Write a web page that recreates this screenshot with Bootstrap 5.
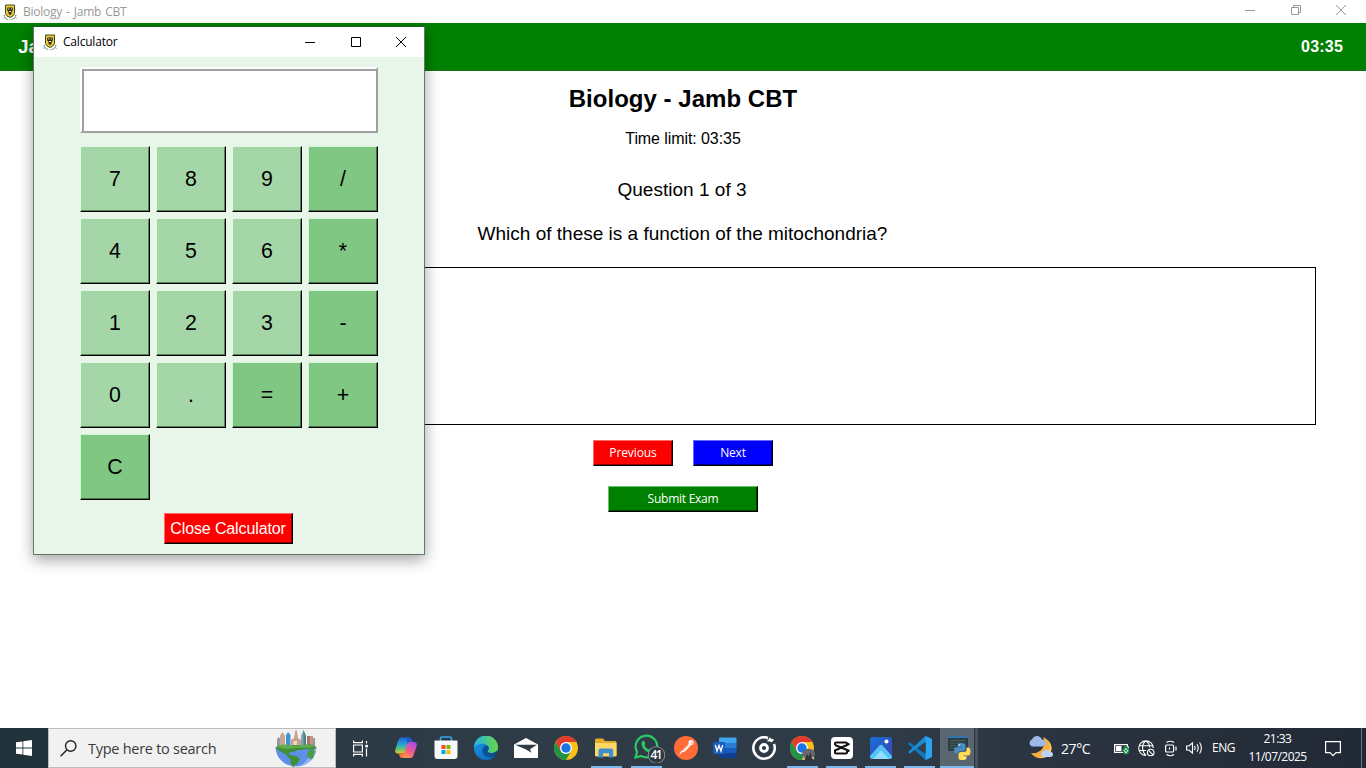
<!DOCTYPE html>
<html lang="en">
<head>
<meta charset="utf-8">
<meta name="viewport" content="width=device-width, initial-scale=1">
<title>Biology - Jamb CBT</title>
<link href="https://cdn.jsdelivr.net/npm/bootstrap@5.3.0/dist/css/bootstrap.min.css" rel="stylesheet">
<style>
  body { font-family: "Liberation Sans", sans-serif; color: #000; background: #fff; }
  svg { display: block; flex: none; }
  .segoe { font-family: "Open Sans", "Noto Sans", sans-serif; }
  .desktop { height: 768px; }
  .main-title { height: 23px; padding-left: 2px; font-size: 12px; color: #999; }
  .main-title .win-name { margin-left: 5px; letter-spacing: -.25px; word-spacing: 1.2px; }
  .win-name { line-height: 16px; }
  .appbar { height: 48px; background: #008000; border-bottom: 1px solid #1a701a; padding: 1px 23px 0 18px; font-weight: 700; color: #fff; }
  .app-name { font-size: 19px; }
  .clock { font-size: 16px; letter-spacing: .2px; }
  .exam h1 { font-size: 24px; font-weight: 700; line-height: 28px; margin: 14px 0 0; letter-spacing: .03px; }
  .limit { font-size: 16px; line-height: 20px; margin-top: 16px; letter-spacing: -.08px; }
  .counter { font-size: 19px; line-height: 24px; margin: 29px 2px 0 0; letter-spacing: .02px; }
  .question { font-size: 19px; line-height: 24px; margin: 20px 1px 0 0; }
  .answers { margin: 21px 50px 0; height: 158px; border: 1px solid #000; }
  .raised { border: 1px solid; border-radius: 0; padding: 0; color: #fff; position: relative; }
  .raised.small-key { height: 26px; width: 80px; font-size: 12px; line-height: 16px; letter-spacing: -.25px; }
  .red { background: #f00; border-color: #ff6a6a #000 #000 #ff6a6a; box-shadow: inset -1px -1px #8a0000; }
  .blue { background: #00f; border-color: #6a6aff #000 #000 #6a6aff; box-shadow: inset -1px -1px #00008a; }
  .green { background: #008000; border-color: #6ac06a #000 #000 #6ac06a; box-shadow: inset -1px -1px #004600; }
  .raised.submit { width: 150px; }

  .calc { position: absolute; left: 33px; top: 26px; width: 392px; height: 529px; background: #e8f5e9; border: 1px solid #6c736d; border-top-color: #1d5c1d; box-shadow: 0 5px 14px rgba(0,0,0,.36); }
  .calc-title { height: 30px; background: #fff; padding-left: 8px; font-size: 12px; }
  .calc-title .win-name { margin-left: 5px; letter-spacing: -.2px; }
  .win-ctl { width: 46px; display: flex; justify-content: center; }
  .win-ctl:nth-child(2) { width: 45px; }
  .display { margin: 10px 46px 0; width: 298px; height: 66px; background: #fff; border: 2px solid; border-color: #fff #a0a0a0 #a0a0a0 #fff; box-shadow: inset 1px 1px #a0a0a0, inset 2px 2px #a0a0a0; }
  .keys { display: grid; grid-template-columns: repeat(4, 70px); gap: 6px; margin: 13px 46px 0; }
  .key { height: 66px; background: #a5d6a7; border: 1px solid; border-color: #e3f9e4 #000 #000 #e3f9e4; box-shadow: inset -1px -1px #5d825f; border-radius: 0; padding: 0; font-size: 21.3px; line-height: 64px; color: #000; }
  .key.op { background: #81c784; border-color: #cdf7cf #000 #000 #cdf7cf; box-shadow: inset -1px -1px #456f47; }
  .raised.close-calc { width: 129px; height: 31px; font-size: 16px; line-height: 27px; margin: 13px 2px 0 0; letter-spacing: -.12px; }

  .taskbar { height: 40px; background: linear-gradient(90deg, #20313a 0, #2b3a44 336px, #2f3c47 560px, #2e3a46 900px, #28303c 1150px, #222936 1366px); color: #fff; }
  .start { width: 48px; }
  .search { width: 288px; background: #f1f1f1; border: 1px solid #bdbdbd; color: #3a3a3a; font-size: 14.5px; padding-left: 11px; padding-right: 18px; }
  .search span { margin: 1px 0 0 11px; letter-spacing: -.27px; }
  .task { width: 40px; display: flex; align-items: center; justify-content: center; }
  .task.slim { width: 39px; padding-right: 1px; }
  .task.on { background: linear-gradient(#7ab8ee, #7ab8ee) 50% 100% / 31px 2px no-repeat; }
  .task.slim.on { background-position: 3px 100%; }
  .task.front { width: 34px; padding-left: 6px; background: linear-gradient(#7ab8ee, #7ab8ee) 0 100% / 100% 2px no-repeat, #5a666f; }
  .edge-tab { width: 4px; border-left: 1px solid #28323b; background: #46525c; }
  .tray { font-size: 12px; }
  .temp { font-size: 14px; width: 53px; padding-left: 8px; letter-spacing: -.4px; }
  .lang { margin-left: 9px; width: 24px; letter-spacing: -.5px; }
  .stamp { margin-left: 12px; width: 59px; line-height: 18px; text-align: center; letter-spacing: -.55px; white-space: nowrap; }
  .peek { width: 5px; border-left: 1px solid #6c727b; }
</style>
</head>
<body>
<svg width="0" height="0" class="position-absolute">
  <defs>
    <symbol id="crest" viewBox="0 0 16 16">
      <path d="M2 11l1 3 3 1.500M14 11l-1 3-3 1.500" fill="none" stroke="#2f6d3c" stroke-dasharray="1.500 .8"/>
      <path d="M1 14.500l2-1M15 14.500l-2-1M5 15.500h6" stroke="#98a898" stroke-dasharray="1 1"/>
      <path d="M3.500 1h9v8.500q-.500 2.500-4.500 4-4-1.500-4.500-4z" fill="#f0c63a" stroke="#3d4a1c"/>
      <path d="M5.500 3.500h5L11 6 9.500 8v2L8 11 6.500 9.500V8L5 6z" fill="#2a2a18"/>
      <path d="M6 5h1.500M8.700 5H10M7 7.500h2" stroke="#f3e6b2" stroke-width="1.100"/>
    </symbol>
    <symbol id="chrome" viewBox="0 0 24 24">
      <circle cx="12" cy="12" r="12" fill="#fbc116"/>
      <path d="M1.600 6A12 12 0 0 0 12 24l5.200-9H6.800z" fill="#229342"/>
      <path d="M1.600 6A12 12 0 0 1 22.400 6H12L6.800 15z" fill="#e33b2e"/>
      <circle cx="12" cy="12" r="6" fill="#fff"/><circle cx="12" cy="12" r="4.700" fill="#1a73e8"/>
    </symbol>
    <linearGradient id="cpA" x1="0" y1="0" x2="0" y2="1"><stop stop-color="#2460d8"/><stop offset=".45" stop-color="#27a6d5"/><stop offset=".75" stop-color="#6cc56a"/><stop offset="1" stop-color="#f2c72b"/></linearGradient>
    <linearGradient id="cpB" x1=".7" y1="0" x2=".2" y2="1"><stop stop-color="#a64ee8"/><stop offset=".5" stop-color="#f0568c"/><stop offset="1" stop-color="#ff9b4b"/></linearGradient>
    <linearGradient id="edA" x1="0" y1="0" x2="1" y2="0"><stop stop-color="#27b2e8"/><stop offset="1" stop-color="#66d844"/></linearGradient>
    <linearGradient id="edB" x1="0" y1="0" x2="1" y2="1"><stop stop-color="#1d9be8"/><stop offset="1" stop-color="#0b5fb8"/></linearGradient>
    <linearGradient id="phA" x1="0" y1="0" x2="1" y2="1"><stop stop-color="#1672d6"/><stop offset="1" stop-color="#3f3fb4"/></linearGradient>
  </defs>
</svg>

<div class="desktop d-flex flex-column position-relative overflow-hidden">
  <header class="main-title segoe d-flex align-items-center">
    <svg width="16" height="16"><use href="#crest"/></svg>
    <span class="win-name">Biology - Jamb CBT</span>
    <div class="ms-auto d-flex align-items-center pb-1" style="margin-right:2px">
      <span class="win-ctl"><svg width="10" height="10" stroke="#999"><path d="M0 5.500h10"/></svg></span>
      <span class="win-ctl"><svg width="10" height="10" fill="none" stroke="#999"><path d="M.5 2.500h7v7h-7zM2.500 2.500v-2h7v7h-2"/></svg></span>
      <span class="win-ctl"><svg width="10" height="10" stroke="#999"><path d="M0 0l10 10M10 0L0 10"/></svg></span>
    </div>
  </header>
  <nav class="appbar d-flex align-items-center justify-content-between">
    <span class="app-name">Ja</span>
    <span class="clock">03:35</span>
  </nav>

  <main class="exam flex-grow-1 text-center">
    <h1>Biology - Jamb CBT</h1>
    <div class="limit">Time limit: 03:35</div>
    <div class="counter">Question 1 of 3</div>
    <div class="question">Which of these is a function of the mitochondria?</div>
    <div class="answers"></div>
    <div class="d-flex justify-content-center segoe" style="gap:20px;margin-top:15px">
      <button class="raised small-key red" style="letter-spacing:-.1px">Previous</button>
      <button class="raised small-key blue">Next</button>
    </div>
    <div class="d-flex justify-content-center segoe" style="margin-top:20px">
      <button class="raised small-key submit green">Submit Exam</button>
    </div>
  </main>

  <section class="calc">
    <div class="calc-title segoe d-flex align-items-center">
      <svg width="16" height="16"><use href="#crest"/></svg>
      <span class="win-name">Calculator</span>
      <div class="ms-auto d-flex align-items-center">
        <span class="win-ctl"><svg width="10" height="10" stroke="#000"><path d="M0 5.500h10"/></svg></span>
        <span class="win-ctl"><svg width="10" height="10" fill="none" stroke="#000"><path d="M.5 .5h9v9h-9z"/></svg></span>
        <span class="win-ctl"><svg width="10" height="10" stroke="#000"><path d="M0 0l10 10M10 0L0 10"/></svg></span>
      </div>
    </div>
    <div class="display"></div>
    <div class="keys">
      <button class="key">7</button><button class="key">8</button><button class="key">9</button><button class="key op">/</button>
      <button class="key">4</button><button class="key">5</button><button class="key">6</button><button class="key op">*</button>
      <button class="key">1</button><button class="key">2</button><button class="key">3</button><button class="key op">-</button>
      <button class="key">0</button><button class="key">.</button><button class="key op">=</button><button class="key op">+</button>
      <button class="key op">C</button>
    </div>
    <div class="d-flex justify-content-center"><button class="raised close-calc red">Close Calculator</button></div>
  </section>

  <footer class="taskbar segoe d-flex">
    <div class="start d-flex align-items-center justify-content-center">
      <svg width="16" height="16" fill="#fff"><path d="M0 2.300l6.500-.9v6.200H0zM7.300 1.300L16 0v7.600H7.300zM0 8.400h6.500v6.200L0 13.700zM7.300 8.400H16V16l-8.700-1.200z"/></svg>
    </div>
    <div class="search d-flex align-items-center">
      <svg width="17" height="17" fill="none" stroke="#222" stroke-width="1.400"><circle cx="10.700" cy="6" r="5.200"/><path d="M7 9.700L.6 16.200"/></svg>
      <span>Type here to search</span>
      <svg class="ms-auto" width="42" height="38" viewBox="0 0 42 38">
        <path d="M2 20V10l2-2 1 2v10zM37 20V9h3v11z" fill="#8e9aa8"/>
        <path d="M5 20V6.500L7.500 3 10 6.500V20z" fill="#c9a68d"/><path d="M11 20V6l2-3 2.500 3v14z" fill="#3f93d0"/>
        <path d="M16 20v-9l3-2 1-6 1-3 1 3 1 6 3 2v9z" fill="#caa08c"/><path d="M18.500 20v-8h3.500v8z" fill="#eed9c6"/>
        <path d="M26 20V7l2.500-6L31 7v13z" fill="#79a8b5"/><path d="M28.500 20V1L31 7v13z" fill="#4f7f93"/>
        <path d="M32 20V7h6v13z" fill="#a97864"/><path d="M35 20V7h3v13z" fill="#c7988a"/>
        <path d="M.500 18h41A20.500 19.500 0 0 1 .5 18z" fill="#5f8fe8"/>
        <path d="M24 37.300Q34 33 36 20l5.300-1q-.5 15-17.300 18.300z" fill="#93b5f5"/>
        <path d="M1 19q1-3 6-3l7 .5 6-.5h7l9-.5q5 .5 5 3.500l-3 2-6-1-5 1-4 0-3 1.500-4 .5-3 2 5 1.500 4 1 3 2.500-2 4-3 2-2 2.500-2-4-1-4.500-3-3-2-2-5-2.500z" fill="#3f8f3a"/>
        <path d="M33 22l4-1.500 3 1.500-2 7-3 1.500-3-4z" fill="#4d9c40"/>
        <path d="M1.500 17.500q6-3 12-1.500t13 0 14.500 1.500q-7 1.700-13 1.200t-13 .8-13.500-2z" fill="#63ad50"/>
      </svg>
    </div>
    <div class="task" style="width:50px;padding-right:2px">
      <svg width="17" height="17" fill="none" stroke="#fff" stroke-width="1.200"><path d="M1.600 .5v2.100h8.800V.5M1.600 5h8.800v7H1.600zM1.600 16.500v-2.100h8.800v2.100M14.500 1v2.500M14.500 8.500v8"/><path d="M13.300 4.800h2.600v2.600h-2.600z" fill="#fff" stroke="none"/></svg>
    </div>
    <div class="task"><svg width="24" height="24" viewBox="0 0 24 24">
      <path d="M16.500 22H10q-2 0-2-1.500L12.500 7.500q.7-1.500 2.700-1.500H20q3.500 0 2.700 4L19.500 19.500q-.8 2.500-3 2.500z" fill="url(#cpB)"/>
      <path d="M7.500 1.500h7.700q2 0 2.600 2l.7 2.500h-3q-2 0-2.600 2l-2.200 7.500q-.7 2-2.700 2H4q-3.500 0-2.700-4L4.500 4q.8-2.500 3-2.500z" fill="url(#cpA)"/>
      <path d="M12.900 8q.6-2 2.600-2h3l-.7-2.500q-.6-2-2.600-2h-3.700q2 0 1.400 6.500z" fill="#2358c5"/>
      <path d="M12.300 10.500L9.800 19q-.6 2.500-2.500 3-1.800-.5-2.300-4.500h3q2 0 2.700-2z" fill="#f0793e"/></svg></div>
    <div class="task"><svg width="24" height="24" viewBox="0 0 24 24" style="margin-top:-1px">
      <path d="M6.500 5.500v-3q0-1.500 1.500-1.500h8q1.500 0 1.500 1.500v3" fill="none" stroke="#32a8e8" stroke-width="1.700"/>
      <path d="M.5 4.500h23V20q0 3-3 3h-17q-3 0-3-3z" fill="#f5f8fa"/>
      <path d="M7.500 9h4v4h-4z" fill="#f25022"/><path d="M12.500 9h4v4h-4z" fill="#7fba00"/><path d="M7.500 14h4v4h-4z" fill="#00a4ef"/><path d="M12.500 14h4v4h-4z" fill="#ffb900"/></svg></div>
    <div class="task"><svg width="24" height="24" viewBox="0 0 24 24">
      <circle cx="12" cy="12" r="12" fill="url(#edB)"/>
      <path d="M0 12A12 12 0 0 1 24 11c.3 4-3 6-6.500 6-3.500 0-4.300-1.500-3.300-3 1.300-2.500-1-6.200-5.200-6.200C4.500 7.800 1 9.500 0 12z" fill="url(#edA)"/>
      <path d="M9.300 11.500C7 16 10 21 15.500 21.500q3.500 0 6.300-2.500l1.200-2-.5-1.800q-2 1.800-5 1.800c-3.500 0-4.300-1.500-3.300-3q.800-1.500.3-3-3.500-2-5.200.5z" fill="#0c4f96"/>
      <path d="M22.500 15.500q1.500-.5 1.500-1l1 4-3 3-1.500-.5q2-1.500 2.300-3-1.500.8-3 1z" fill="#2d3a45"/>
      <path d="M14.200 14q1.300-2.500-.7-4.500-1.500 0-2.500 1 1.500 1 1 3.500z" fill="#0c4f96"/></svg></div>
    <div class="task"><svg width="24" height="20" viewBox="0 0 24 20">
      <path d="M0 6.500L12 0l12 6.500V20H0z" fill="#fff"/><path d="M1 6.800h22l-7 4.500 1.500 3.500L12 11.500z" fill="#2e3b46"/></svg></div>
    <div class="task"><svg width="24" height="24"><use href="#chrome"/></svg></div>
    <div class="task on"><svg width="22" height="20" viewBox="0 0 22 20">
      <path d="M0 2Q0 .5 1.500.5H8L10 3h10q1.500 0 1.500 1.500V18H0z" fill="#e9a92b"/><path d="M0 5h21.500v12q0 1.500-1.500 1.500H1.500Q0 18.500 0 17z" fill="#fcd869"/>
      <path d="M3.500 19.500v-7q0-2 2-2h10.700q2 0 2 2v7H14v-4.200H8v4.200z" fill="#3f8fd0"/></svg></div>
    <div class="task on"><svg width="34" height="30" viewBox="0 0 34 30" style="margin-left:5px">
      <path d="M3.500 24.500l1.600-5.600a10.800 10.800 0 1 1 4.100 4z" fill="none" stroke="#28cb63" stroke-width="2.200"/>
      <path d="M10 8.500c1-1 2-1 2.500 0l.8 2c.3.800-.8 1.500-.8 2 .9 2 2.500 3.400 4.500 4 .6 0 1.300-1.500 2-1.200l2 1c1 .6.300 2.200-.6 2.700-5 2.500-13-5-10.400-10.500z" fill="#28cb63"/>
      <circle cx="24.500" cy="22" r="8.300" fill="#2c3740" stroke="#8b949b"/>
      <text x="24.500" y="26.300" text-anchor="middle" font-family="Open Sans, sans-serif" font-size="12" font-weight="600" fill="#fff" textLength="12">41</text></svg></div>
    <div class="task"><svg width="24" height="24" viewBox="0 0 24 24">
      <circle cx="12" cy="12" r="12" fill="#ff6c37"/><circle cx="17" cy="6.500" r="2.500" fill="#fff"/><path d="M14.800 7.800l2 1.700-6 6-2.600.8L5 19.500l1.800-4z" fill="#fff"/><path d="M8 15l6.500-6M16.500 6.700l2 .5" stroke="#ff6c37" stroke-width=".7"/></svg></div>
    <div class="task slim"><svg width="24" height="22" viewBox="0 0 24 22">
      <path d="M6 1.500Q6 .5 7 .5h15.500q1 0 1 1V6H6z" fill="#41a5ee"/><path d="M6 6h17.500v5H6z" fill="#2b7cd3"/><path d="M6 11h17.500v5H6z" fill="#185abd"/><path d="M6 16h17.500v4q0 1-1 1H7q-1 0-1-1z" fill="#103f91"/>
      <rect y="5" width="12" height="12" rx="1" fill="#185abd"/><path d="M2.300 8l1.700 6L6 8.500 8 14l1.700-6" fill="none" stroke="#fff" stroke-width="1.400"/></svg></div>
    <div class="task slim"><svg width="24" height="24" viewBox="0 0 24 24" fill="none" stroke="#fff">
      <path d="M16 2A10.700 10.700 0 1 0 22 8" stroke-width="2.500"/><circle cx="12" cy="12" r="3.500" stroke-width="2.800"/><path d="M15.500 4.500l6-.5M17.500 2l2.500 4" stroke-width="2"/></svg></div>
    <div class="task slim on"><svg width="26" height="24" viewBox="0 0 26 24">
      <use href="#chrome" width="24" height="24"/><path d="M12 19q0-4 3-5 2-2 5-1 4 0 5 4l-1 6H13z" fill="#65676a"/><path d="M15 24l2-6 2 3 1-5 3 8z" fill="#303234"/><path d="M12 23l2-3 1 4zM21 21h3v3z" fill="#cfbb94"/></svg></div>
    <div class="task slim on"><svg width="22" height="22" viewBox="0 0 22 22">
      <rect width="22" height="22" rx="4" fill="#fff"/><path d="M4 8V6.500q0-1 1-1h10q1 0 1 1V8L4 13.500v2q0 1 1 1h10q1 0 1-1V14M4 8l14.500 6M16 8l2.500-1.300" fill="none" stroke="#111" stroke-width="2"/></svg></div>
    <div class="task slim on"><svg width="22" height="22" viewBox="0 0 22 22">
      <rect width="22" height="22" rx="2.500" fill="url(#phA)"/><path d="M0 19L9.500 8.500q1.500-1.400 3 0L22 19v.5q0 2.500-2.500 2.500h-17Q0 22 0 19.500z" fill="#55c3f5"/><path d="M3 22l8-8.500 8 8.500z" fill="#8fe0ff"/><circle cx="16.500" cy="4.500" r="2" fill="#fff"/></svg></div>
    <div class="task slim on"><svg width="24" height="24" viewBox="0 0 24 24">
      <path d="M1.500 6.200L0 8l17.500 16 5-2.200z" fill="#0f79bd"/><path d="M1.500 17.800L0 16 17.500 0l5 2.200z" fill="#1b8dd8"/><path d="M17.500 0L24 3v18l-6.500 3z" fill="#2ba3ee"/><path d="M17.500 7v10L11 12z" fill="#343f49"/></svg></div>
    <div class="task front"><svg width="24" height="24" viewBox="0 0 24 24">
      <path d="M0 0h20v15H0z" fill="#2c3e45"/><path d="M0 0h20v2H0z" fill="#3275a6"/><path d="M2 4.500h16M2 7h12M2 9.500h6M2 12h5" stroke="#496052"/>
      <path d="M9.500 11V9q0-2 4-2t4 2v4q0 2-2 2h-4q-2 0-2 2.500H8Q6 17.500 6 14.300T8 11.300h6v-.5z" fill="#4a8cc6"/>
      <path d="M18.500 11.500H20q2.500 0 2.500 4T20 19.500h-4.500v.8h3V22q0 2-4 2t-4-2v-3.500q0-2.500 2-2.500h4q2 0 2-2.500z" fill="#ffdc57"/><circle cx="11.500" cy="9" r=".8" fill="#fff"/><circle cx="16.500" cy="22" r=".8" fill="#fff"/></svg></div>
    <div class="edge-tab"></div>

    <div class="tray ms-auto d-flex align-items-center">
      <svg width="25" height="24" viewBox="0 0 25 24">
        <path d="M15 1q9 4 8.500 12-1.500 9-10.500 9-7 0-10-5 7 1 11-4t1-12z" fill="#f6ae3c"/><path d="M20 5q4 7-1 12.500T7 21q5 2.500 11 0 5.500-3 5.500-8.500 0-4-3.500-7.500z" fill="#ffc45a"/>
        <path d="M4 10.500A3.700 3.700 0 0 1 4 3.500Q5.500 0 9 0t5 3.500q4 .5 4 3.500t-4 3.500z" fill="#9db9ea"/><path d="M15 21a3 3 0 0 1 0-5.500q1-2 3.500-2t3.500 2q3 .5 3 3T22 21z" fill="#bcd2f7"/></svg>
      <span class="temp">27°C</span>
      <svg width="16" height="14" viewBox="0 0 16 14" style="margin-left:8px"><path d="M.6 3.600h12.800v7.800H.6z" fill="none" stroke="#fff" stroke-width="1.200"/><path d="M2 5h5.500v5H2zM14 5.500h1v2h-1z" fill="#fff"/><path d="M12 4.500q3.500 2.500 3.500 5t-3.500 4.500q-3.500-2-3.500-4.500T12 4.500z" fill="#139347"/><path d="M12 7.500l1.600 2.200L12 12l-1.600-2.300z" fill="none" stroke="#fff" stroke-width=".9"/></svg>
      <svg width="17" height="17" viewBox="0 0 17 17" fill="none" stroke="#fff" stroke-width="1.100" style="margin-left:8px"><path d="M8 15.500A7.300 7.300 0 1 1 15.300 8M8 15.500C3 11 4 3 8 1c2.500 1.500 3.600 4 3.600 6.500M1 5.700h13.800M1 10.500h7"/><circle cx="12.700" cy="12.500" r="3.300"/><path d="M10.500 10.300l4.500 4.500"/></svg>
      <svg width="12" height="17" viewBox="0 0 12 17" fill="none" stroke="#fff" stroke-width="1.200" style="margin-left:10px"><path d="M1.500 2.500q4-2.500 7.500 0M1.500 14.500q4 2.500 7.500 0M1.600 5h6q1 0 1 1v5q0 1-1 1h-6q-1 0-1-1V6q0-1 1-1zM11 6.500v4"/><path d="M4.500 7.500v2" /></svg>
      <svg width="17" height="14" viewBox="0 0 17 14" fill="none" stroke="#fff" stroke-width="1.100" style="margin-left:9px"><path d="M.6 5v4h2.300L6.500 12V2L2.900 5zM8.500 5q1.200 2 0 4M11 3.300q2.300 3.700 0 7.400M13.600 1.500q3.600 5.500 0 11"/></svg>
      <span class="lang">ENG</span>
      <div class="stamp"><div>21:33</div><div>11/07/2025</div></div>
      <svg width="16" height="17" viewBox="0 0 16 17" fill="none" stroke="#fff" stroke-width="1.200" style="margin-left:18px;margin-right:20px"><path d="M.6 1.600h14.800v11H11l-3 3-3-3H.6z"/></svg>
      <div class="peek align-self-stretch"></div>
    </div>
  </footer>
</div>
<script src="https://cdn.jsdelivr.net/npm/bootstrap@5.3.0/dist/js/bootstrap.bundle.min.js"></script>
</body>
</html>
